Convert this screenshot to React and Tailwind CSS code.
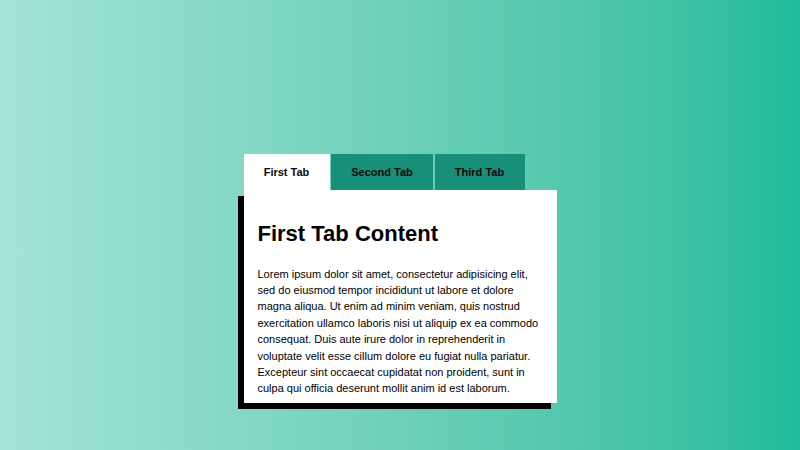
import { useState } from 'react'

const tabs = [
  {
    label: 'First Tab',
    title: 'First Tab Content',
    width: 'w-[86px]',
  },
  {
    label: 'Second Tab',
    title: 'Second Tab Content',
    width: 'w-[102px]',
  },
  {
    label: 'Third Tab',
    title: 'Third Tab Content',
    width: 'w-[90px]',
  },
]

const lorem =
  'Lorem ipsum dolor sit amet, consectetur adipisicing elit, sed do eiusmod tempor incididunt ut labore et dolore magna aliqua. Ut enim ad minim veniam, quis nostrud exercitation ullamco laboris nisi ut aliquip ex ea commodo consequat. Duis aute irure dolor in reprehenderit in voluptate velit esse cillum dolore eu fugiat nulla pariatur. Excepteur sint occaecat cupidatat non proident, sunt in culpa qui officia deserunt mollit anim id est laborum.'

function App() {
  const [active, setActive] = useState(0)

  return (
    <div className="flex h-[450px] w-[800px] justify-center bg-gradient-to-r from-[#a3e4d7] to-[#1abc9c] pt-[154px] font-['Liberation_Sans',Arial,sans-serif]">
      <div className="w-[313px]">
        <div className="flex gap-[1.5px]">
          {tabs.map((tab, i) => (
            <button
              key={tab.label}
              type="button"
              onClick={() => setActive(i)}
              className={
                (i === active ? 'bg-white ' : 'bg-[#178f79] ') +
                tab.width +
                ' h-[36px] text-center text-[11px] font-bold text-[#0a0a0a]'
              }
            >
              {tab.label}
            </button>
          ))}
        </div>
        <div className="bg-white px-[14px] pb-[6px] pt-[31px] text-black shadow-[-6px_6px_0_#000]">
          <h2 className="text-[22px] font-bold leading-[26px]">{tabs[active].title}</h2>
          <p className="mt-[18.5px] text-[11px] leading-[16.4px]">{lorem}</p>
        </div>
      </div>
    </div>
  )
}

export default App
